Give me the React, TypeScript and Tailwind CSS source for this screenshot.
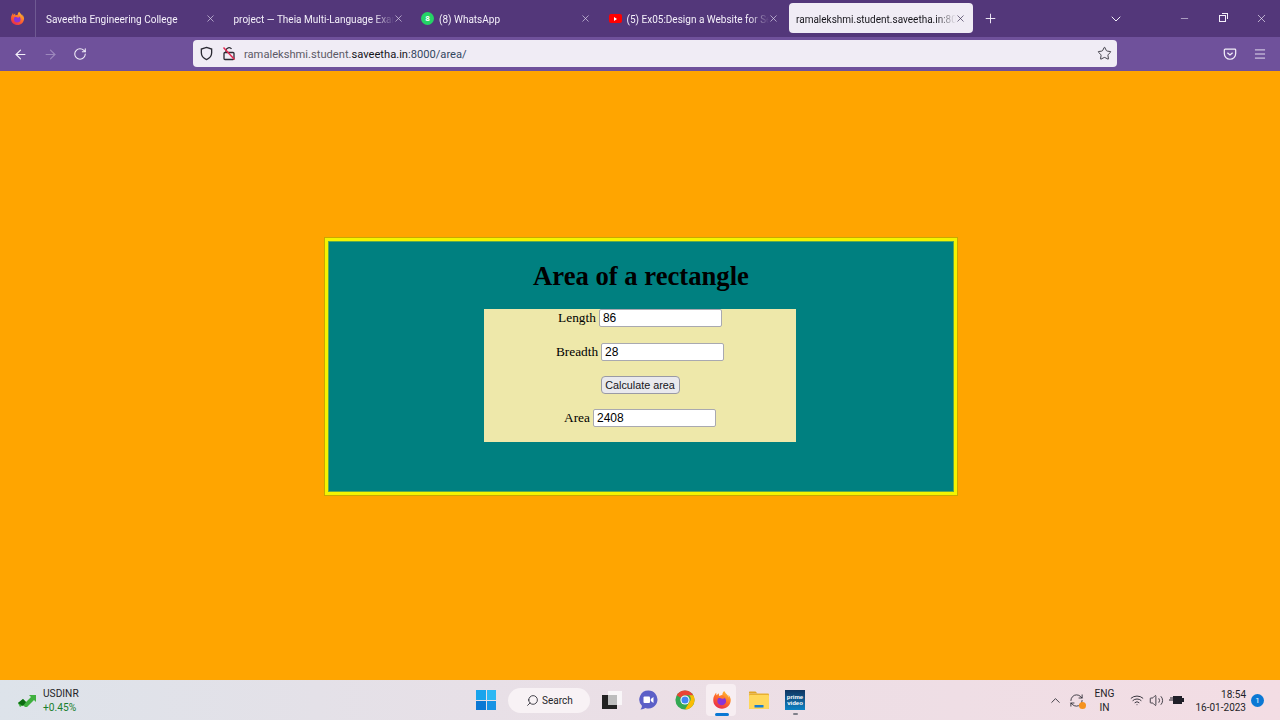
import React from 'react'
import { ArrowLeft, ArrowRight, RotateCw, RefreshCw, Star, X, Plus, ChevronDown, ChevronUp, Minus, Menu, Search, Wifi, Volume2 } from 'lucide-react'

function FirefoxIcon({ size = 16 }: { size?: number }) {
  return (
    <svg width={size} height={size} viewBox="0 0 32 32">
      <defs>
        <linearGradient id="ffa" x1="0.8" y1="0" x2="0.2" y2="1">
          <stop offset="0" stopColor="#ffc42e" />
          <stop offset="0.5" stopColor="#ff6a2b" />
          <stop offset="1" stopColor="#e5234f" />
        </linearGradient>
      </defs>
      <path d="M29 12c-.7-1.800-2.100-3.700-3.200-4.300.9 1.700 1.400 3.500 1.600 4.800-1.800-4.500-4.900-6.300-7.400-10.300-.1-.2-.3-.4-.4-.7-1 .6-3 2.800-3.100 6.300-1.500.1-3 .7-4.200 1.600-.3-.3-.7-.5-1-.7-.4-1.100-.4-2.300 0-3.500-1.700.8-3 2-3.900 3.100-.6-.8-.6-3.300-.5-3.900-.5.2-1.600 1.500-2.200 2.800C2.500 10.300 2 13 2 16.500 2 24.500 8.300 30 16 30s14-6.300 14-14c0-1.400-.4-2.800-1-4z" fill="url(#ffa)" />
      <circle cx="15.500" cy="17.500" r="7" fill="#8a35d6" />
      <path d="M9 13c2-1 4-.5 6 .5s4 1 6-1c-1-2-3-3.500-6-3.500-2.500 0-5 1.500-6 4z" fill="#ff7a2b" />
    </svg>
  )
}

function WinLogo() {
  return (
    <div className="grid grid-cols-2 gap-[1px] w-[20px] h-[20px]">
      <div className="bg-[#19a4ec]" />
      <div className="bg-[#2cb8f4]" />
      <div className="bg-[#0a78d4]" />
      <div className="bg-[#1793e4]" />
    </div>
  )
}

function ChromeIcon() {
  return (
    <svg width="20" height="20" viewBox="0 0 48 48">
      <circle cx="24" cy="24" r="23" fill="#34a853" />
      <path d="M24 1a23 23 0 0 1 19.900 11.500H24a11.500 11.500 0 0 0-10 5.800L4.100 12.500A23 23 0 0 1 24 1z" fill="#ea4335" />
      <path d="M43.900 12.500A23 23 0 0 1 24 47l10-17.200a11.500 11.500 0 0 0 0-17.300z" fill="#fbbc04" />
      <circle cx="24" cy="24" r="11" fill="#fff" />
      <circle cx="24" cy="24" r="8.500" fill="#4285f4" />
    </svg>
  )
}

function MeetIcon() {
  return (
    <svg width="20" height="20" viewBox="0 0 20 20">
      <path d="M10.500 .5a9 9 0 1 1-3 17.500c-1.600 1-3.500 1.500-5 1.400 1-1 1.500-2.400 1.400-3.600A9 9 0 0 1 10.500 .5z" fill="#5b5fc7" />
      <rect x="5.500" y="6.500" width="6.500" height="6.500" rx="1" fill="#fff" />
      <path d="M12.800 9l2.700-2v6l-2.700-2z" fill="#fff" />
    </svg>
  )
}

function FolderIcon() {
  return (
    <svg width="20" height="20" viewBox="0 0 20 20">
      <path d="M0 2.500c0-.6.400-1 1-1h5.500l2 2H0z" fill="#e0a526" />
      <rect x="0" y="3.500" width="20" height="15.500" rx="1" fill="#e8b030" />
      <rect x="0" y="5" width="20" height="14" rx="1" fill="#ffd75a" />
      <rect x="5.500" y="15" width="9" height="2.500" fill="#1a7fd0" />
    </svg>
  )
}

function PrimeIcon() {
  return (
    <div className="w-[20px] h-[20px] bg-gradient-to-b from-[#0f3560] to-[#0b84c6] flex flex-col items-center justify-center text-white text-[6px] leading-[6px] font-bold font-['Liberation_Sans',sans-serif]">
      <span>prime</span>
      <span>video</span>
    </div>
  )
}

function UsdArrow() {
  return (
    <svg width="20" height="14" viewBox="0 0 20 14">
      <path d="M0 10l5-4 3 3 5-5-2-2h7v7l-2-2-8 8-3-3-3 2z" fill="#3fb03f" />
      <path d="M0 10l5-4 3 3-3 4z" fill="#0c6b12" />
    </svg>
  )
}

function Tab({ title, icon, active }: { title: string; icon?: React.ReactNode; active?: boolean }) {
  return (
    <div className="w-[187.5px] h-[37px] shrink-0 relative flex items-center pl-[10px]">
      {active && <div className="absolute left-[3px] right-[1px] top-[3px] h-[30px] bg-[#f0ecf5] rounded" />}
      <div className={`relative flex items-center min-w-0 w-[160px] h-[16px] ${active ? 'text-[#15141a]' : 'text-[#f4f0fa]'}`}>
        {icon && <span className="shrink-0 mr-[5px] flex">{icon}</span>}
        <span className="whitespace-nowrap overflow-hidden flex-1 pt-[2px] text-[10px] leading-[16px] [mask-image:linear-gradient(to_left,transparent,black_20px)]">{title}</span>
      </div>
      <X size={11} strokeWidth={1.5} className={`relative ml-[-1px] shrink-0 ${active ? 'text-[#3a3050]' : 'text-[#d9d0e8]'}`} />
    </div>
  )
}

const inputClass =
  "w-[123px] h-[18px] bg-white border border-[#a9a9b0] rounded-[2px] px-[3px] font-['Liberation_Sans',sans-serif] text-[12px] text-black"

export default function App() {
  return (
    <div className="w-[1280px] h-[720px] overflow-hidden flex flex-col bg-[#ffa500] font-['Roboto',sans-serif]">
      {/* tab strip */}
      <div className="h-[37px] bg-[#53377a] flex items-center shrink-0">
        <div className="w-[36px] h-[37px] flex items-center justify-center border-r border-[#6f5a92]">
          <FirefoxIcon size={15} />
        </div>
        <Tab title="Saveetha Engineering College" />
        <Tab title="project — Theia Multi-Language Exam" />
        <Tab
          title="(8) WhatsApp"
          icon={
            <span className="w-[13px] h-[13px] rounded-full bg-[#25d366] text-white text-[8px] leading-[13px] text-center font-bold">8</span>
          }
        />
        <Tab
          title="(5) Ex05:Design a Website for Server Side"
          icon={
            <span className="w-[13px] h-[9px] rounded-[2px] bg-[#f00] flex items-center justify-center">
              <span className="w-0 h-0 border-y-[2px] border-y-transparent border-l-[3px] border-l-white" />
            </span>
          }
        />
        <Tab title="ramalekshmi.student.saveetha.in:8000/area/" active />
        <Plus size={15} strokeWidth={1.5} className="text-[#f4f0fa] ml-[9px]" />
        <ChevronDown size={16} strokeWidth={1.5} className="text-[#f4f0fa] ml-[110px]" />
        <Minus size={11} strokeWidth={1.2} className="text-[#f4f0fa] ml-[55px]" />
        <div className="ml-[29px] w-[7px] h-[7px] border border-[#f4f0fa] relative">
          <div className="absolute -top-[3px] -right-[3px] w-[6px] h-[6px] border-t border-r border-[#f4f0fa]" />
        </div>
        <X size={13} strokeWidth={1.2} className="text-[#f4f0fa] ml-[29px]" />
      </div>

      {/* nav bar */}
      <div className="h-[34px] bg-[#6f519b] flex items-center shrink-0">
        <ArrowLeft size={15} strokeWidth={1.8} className="text-[#f4f0fa] ml-[13px]" />
        <ArrowRight size={15} strokeWidth={1.8} className="text-[#9d88bd] ml-[15px]" />
        <RotateCw size={14} strokeWidth={1.8} className="text-[#f4f0fa] ml-[15px]" />
        <div className="ml-[106px] w-[924px] h-[27px] -mt-[1px] bg-[#f0ecf5] rounded-[4px] flex items-center relative">
          <svg width="15" height="15" viewBox="0 0 16 16" className="ml-[6px]" fill="none" stroke="#2b2a33" strokeWidth="1.400">
            <path d="M8 1.500l5.500 1.800v4c0 3.400-2.300 5.900-5.500 7.200-3.200-1.300-5.500-3.800-5.500-7.200v-4z" />
          </svg>
          <svg width="14" height="15" viewBox="0 0 14 15" className="ml-[8px]" fill="none" strokeWidth="1.300">
            <rect x="2" y="6.500" width="10" height="7" rx="1" stroke="#2b2a33" />
            <path d="M4 6.500V4.500a3 3 0 0 1 5.500-1.500" stroke="#2b2a33" />
            <path d="M1.500 1.500l11 12" stroke="#e22850" strokeWidth="1.500" />
          </svg>
          <span className="ml-[8px] pt-[2px] text-[11.150px] leading-[16px] text-[#5c5a66] whitespace-nowrap">
            ramalekshmi.student.<span className="text-[#15141a]">saveetha.in</span><span className="text-[#33475f]">:8000/area/</span>
          </span>
          <Star size={15} strokeWidth={1.4} className="absolute right-[5px] top-[6px] text-[#2b2a33]" />
        </div>
        <svg width="14" height="14" viewBox="0 0 16 16" className="ml-[106px]" fill="none" stroke="#f4f0fa" strokeWidth="1.400">
          <path d="M2.500 2.500h11a1 1 0 0 1 1 1v4a6.500 6.500 0 0 1-13 0v-4a1 1 0 0 1 1-1z" />
          <path d="M5 6.500l3 2.500 3-2.500" />
        </svg>
        <Menu size={14} strokeWidth={1.5} className="text-[#f4f0fa] ml-[16px]" />
      </div>

      {/* page */}
      <div className="flex-1 pt-[167px] font-['Liberation_Serif',serif] text-black">
        <div className="w-[632px] h-[257px] ml-[325px] bg-[#008080] border-[3px] border-[#f4f400] shadow-[0_0_0_1px_#c9a800,inset_0_0_0_1px_#5ea850] pt-[20px]">
          <h1 className="text-center text-[26.670px] leading-[30px] font-bold">Area of a rectangle</h1>
          <div className="w-[312px] h-[133px] ml-[156px] mt-[18px] bg-[#eee8aa] flex flex-col items-center text-[13.330px] leading-[18px]">
            <div className="flex items-center h-[18px] gap-[3px]">
              <span>Length</span>
              <input readOnly value="86" className={inputClass} />
            </div>
            <div className="flex items-center h-[18px] gap-[3px] mt-[16px]">
              <span>Breadth</span>
              <input readOnly value="28" className={inputClass} />
            </div>
            <button className="mt-[15px] w-[79px] h-[18px] bg-[#e9e9ed] border border-[#9a9aa4] rounded-[4px] text-[#15141a] font-['Liberation_Sans',sans-serif] text-[10.800px] leading-[16px]">Calculate area</button>
            <div className="flex items-center h-[18px] gap-[3px] mt-[15px]">
              <span>Area</span>
              <input readOnly value="2408" className={inputClass} />
            </div>
          </div>
        </div>
      </div>

      {/* taskbar */}
      <div className="h-[40px] shrink-0 bg-gradient-to-r from-[#dde3ea] via-[#ebdfe6] to-[#f3dde4] flex items-center relative text-[#1f1f28]">
        <div className="ml-[18px] flex items-center w-[70px]">
          <UsdArrow />
          <div className="ml-[5px] pt-[1px] text-[10.200px] leading-[14px]">
            <div>USDINR</div>
            <div className="text-[#1a7f2e]">+0.45%</div>
          </div>
        </div>
        <div className="ml-[388px] flex items-center">
          <WinLogo />
          <div className="ml-[12px] w-[82px] h-[25px] bg-[#f8f2f5] rounded-full flex items-center pl-[18px] gap-[3px] text-[10px]">
            <Search size={13} strokeWidth={1.5} className="-scale-x-100" />
            <span>Search</span>
          </div>
          <div className="ml-[12px] w-[20px] h-[18px] relative">
            <div className="absolute left-0 bottom-0 w-[15px] h-[14px] bg-[#222]" />
            <div className="absolute right-0 top-0 w-[14px] h-[14px] bg-white/70" />
          </div>
          <div className="ml-[16px]"><MeetIcon /></div>
          <div className="ml-[17px]"><ChromeIcon /></div>
          <div className="ml-[11px] w-[30px] h-[32px] bg-[#f7eef2] rounded flex items-center justify-center relative pl-[2px]">
            <FirefoxIcon size={20} />
            <div className="absolute bottom-0 left-[9px] w-[14px] h-[3px] bg-[#0a78d4] rounded-full" />
          </div>
          <div className="ml-[13px]"><FolderIcon /></div>
          <div className="ml-[16px] relative">
            <PrimeIcon />
            <div className="absolute -bottom-[5px] left-[8px] w-[5px] h-[2px] bg-[#80808a] rounded-full" />
          </div>
        </div>
        <div className="absolute right-[16px] top-0 h-[40px] flex items-center">
          <ChevronUp size={15} strokeWidth={1.3} />
          <div className="ml-[6px] relative">
            <RefreshCw size={15} strokeWidth={1.3} />
            <div className="absolute right-[-2px] bottom-[-1px] w-[7px] h-[7px] rounded-full bg-[#f5921e]" />
          </div>
          <div className="ml-[11px] pt-[1px] text-[10.200px] leading-[14px] text-center">
            <div>ENG</div>
            <div>IN</div>
          </div>
          <Wifi size={14} strokeWidth={1.5} className="ml-[15px]" />
          <Volume2 size={15} strokeWidth={1.3} className="ml-[5px]" />
          <svg width="15" height="12" viewBox="0 0 15 12" className="ml-[5px]">
            <rect x="4" y="2" width="9" height="8" fill="#1f1f28" />
            <rect x="13" y="4" width="2" height="4" fill="#1f1f28" />
            <path d="M0 6h4M2 3v2M4 3v2" stroke="#1f1f28" />
          </svg>
          <div className="ml-[12px] pt-[1px] text-[10px] leading-[13px] text-right">
            <div>18:54</div>
            <div>16-01-2023</div>
          </div>
          <div className="ml-[5px] w-[13px] h-[13px] rounded-full bg-[#0a78d4] text-white text-[8px] leading-[13px] text-center">1</div>
        </div>
      </div>
    </div>
  )
}
